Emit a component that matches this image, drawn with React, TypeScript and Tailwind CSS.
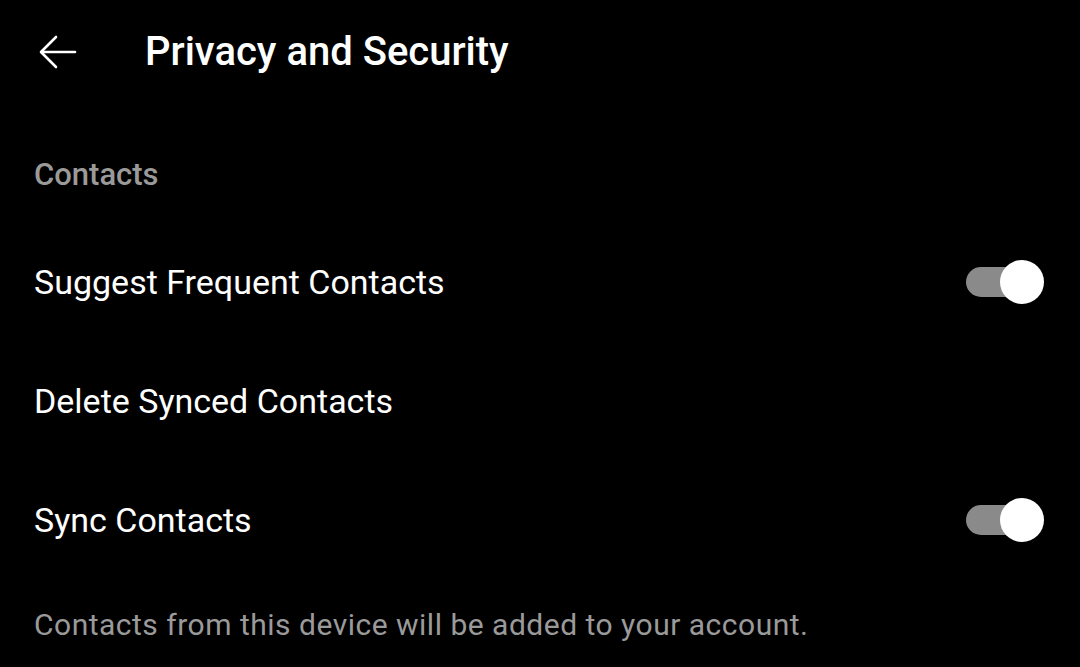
function Toggle() {
  return (
    <div className="relative w-[78px] h-[44px] flex items-center">
      <div className="w-[64px] h-[30px] rounded-full bg-[#8a8a8a]" />
      <div className="absolute right-0 top-0 w-[44px] h-[44px] rounded-full bg-white" />
    </div>
  );
}

function Row({ label, toggle }: { label: string; toggle?: boolean }) {
  return (
    <div className="h-[119px] flex items-center justify-between pl-[34px] pr-[36px]">
      <span className="text-[34px] leading-[40px] text-white">{label}</span>
      {toggle && <Toggle />}
    </div>
  );
}

export default function App() {
  return (
    <div
      className="w-[1080px] h-[667px] bg-black overflow-hidden"
      style={{ fontFamily: "Roboto, 'Liberation Sans', sans-serif" }}
    >
      <div className="h-[104px] flex items-center">
        <div className="w-[145px] pl-[38px] flex items-center">
          <svg width="40" height="36" viewBox="0 0 40 36" fill="none" stroke="white" strokeWidth="2.6" strokeLinecap="round" strokeLinejoin="round">
            <path d="M37 18H4" />
            <path d="M18 3L3 18L18 33" />
          </svg>
        </div>
        <h1 className="text-[40px] leading-[46px] font-medium text-white">Privacy and Security</h1>
      </div>

      <div className="pl-[34px] mt-[51px] mb-[27px]">
        <span className="text-[31px] leading-[40px] font-medium text-[#9a9a9a]">Contacts</span>
      </div>

      <Row label="Suggest Frequent Contacts" toggle />
      <Row label="Delete Synced Contacts" />
      <Row label="Sync Contacts" toggle />

      <div className="pl-[34px] pt-[26px]">
        <p className="text-[30px] leading-[40px] text-[#9a9a9a] tracking-[0.5px]">
          Contacts from this device will be added to your account.
        </p>
      </div>
    </div>
  );
}
